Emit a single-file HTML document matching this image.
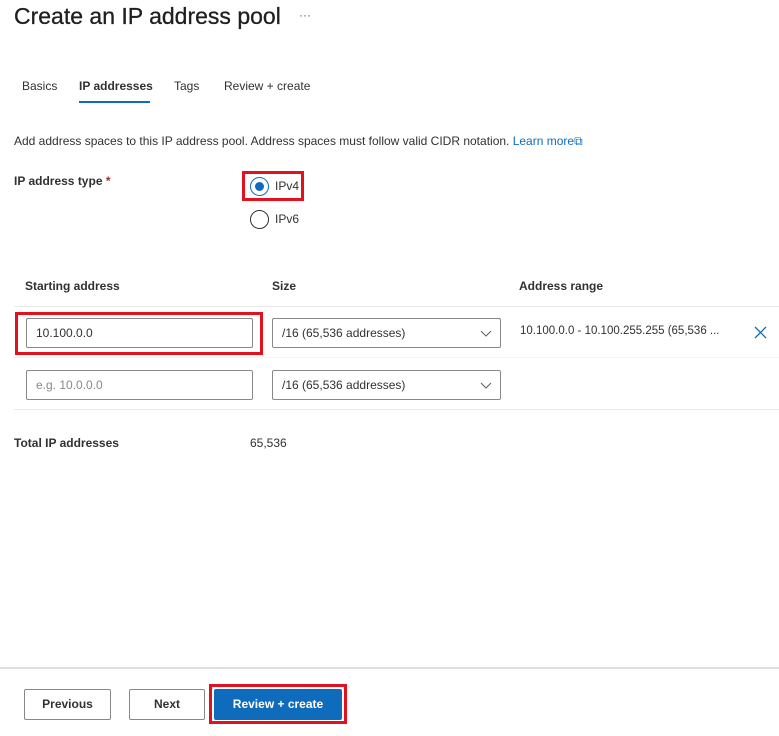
<!DOCTYPE html>
<html><head><style>
*{box-sizing:border-box;margin:0;padding:0}
body{width:779px;height:736px;background:#fff;font-family:"Liberation Sans",sans-serif;color:#323130;position:relative;overflow:hidden}
.a{position:absolute;white-space:nowrap}
.inp{position:absolute;border:1px solid #8a8886;border-radius:2px;height:30px;font-size:12px;padding:0 9px;line-height:28px;background:#fff}
.red{position:absolute;border:3px solid #e3101e}
.btn{position:absolute;border:1px solid #8a8886;border-radius:2px;height:31px;font-size:12px;font-weight:bold;text-align:center;line-height:29px;background:#fff}
.line{position:absolute;left:14px;right:0;height:1px;background:#edebe9}
.chev{position:absolute;right:8px;top:9px}
</style></head><body>
<div class="a" style="left:14px;top:3px;font-size:23px;color:#201f1e;-webkit-text-stroke:0.3px #201f1e">Create an IP address pool</div>
<div class="a" style="left:299px;top:8px;font-size:12px;color:#605e5c">···</div>
<div class="a" style="left:22px;top:79px;font-size:12px">Basics</div>
<div class="a" style="left:79px;top:79px;font-size:12px;font-weight:bold">IP addresses</div>
<div class="a" style="left:79px;top:101px;width:71px;height:2px;background:#0f6cbd"></div>
<div class="a" style="left:174px;top:79px;font-size:12px">Tags</div>
<div class="a" style="left:224px;top:79px;font-size:12px">Review + create</div>
<div class="a" style="left:14px;top:134px;font-size:12px">Add address spaces to this IP address pool. Address spaces must follow valid CIDR notation. <span style="color:#0f6cbd">Learn more&#x29C9;</span></div>
<div class="a" style="left:14px;top:174px;font-size:12px;font-weight:bold">IP address type <span style="color:#a4262c">*</span></div>
<div class="red" style="left:242px;top:171px;width:62px;height:30px"></div>
<div class="a" style="left:250px;top:177px;width:19px;height:19px;border:1px solid #0f6cbd;border-radius:50%"><div style="margin:4px;width:9px;height:9px;border-radius:50%;background:#0f6cbd"></div></div>
<div class="a" style="left:275px;top:179px;font-size:12px">IPv4</div>
<div class="a" style="left:250px;top:210px;width:19px;height:19px;border:1px solid #323130;border-radius:50%"></div>
<div class="a" style="left:275px;top:212px;font-size:12px">IPv6</div>
<div class="a" style="left:25px;top:279px;font-size:12px;font-weight:bold">Starting address</div>
<div class="a" style="left:272px;top:279px;font-size:12px;font-weight:bold">Size</div>
<div class="a" style="left:519px;top:279px;font-size:12px;font-weight:bold">Address range</div>
<div class="line" style="top:306px"></div>
<div class="line" style="top:357px;background:#f6f5f4"></div>
<div class="line" style="top:409px"></div>
<div class="red" style="left:15px;top:312px;width:248px;height:43px"></div>
<div class="inp" style="left:26px;top:318px;width:227px">10.100.0.0</div>
<div class="inp" style="left:272px;top:318px;width:229px">/16 (65,536 addresses)<svg class="chev" width="12" height="10" viewBox="0 0 12 10"><path d="M1 3l5 5 5-5" fill="none" stroke="#605e5c" stroke-width="1"/></svg></div>
<div class="a" style="left:520px;top:325px;font-size:11.5px">10.100.0.0 - 10.100.255.255 (65,536 ...</div>
<svg class="a" style="left:754px;top:326px" width="13" height="13" viewBox="0 0 13 13"><path d="M1 1l11 11M12 1L1 12" stroke="#0f6cbd" stroke-width="1.3"/></svg>
<div class="inp" style="left:26px;top:370px;width:227px;color:#8a8886">e.g. 10.0.0.0</div>
<div class="inp" style="left:272px;top:370px;width:229px">/16 (65,536 addresses)<svg class="chev" width="12" height="10" viewBox="0 0 12 10"><path d="M1 3l5 5 5-5" fill="none" stroke="#605e5c" stroke-width="1"/></svg></div>
<div class="a" style="left:14px;top:436px;font-size:12px;font-weight:bold">Total IP addresses</div>
<div class="a" style="left:250px;top:436px;font-size:12px">65,536</div>
<div class="a" style="left:0;top:667px;width:779px;height:2px;background:#e1dfdd"></div>
<div class="btn" style="left:24px;top:689px;width:87px">Previous</div>
<div class="btn" style="left:129px;top:689px;width:76px">Next</div>
<div class="red" style="left:209px;top:684px;width:138px;height:40px"></div>
<div class="btn" style="left:214px;top:689px;width:128px;background:#0f6cbd;border-color:#0f6cbd;color:#fff">Review + create</div>
</body></html>
